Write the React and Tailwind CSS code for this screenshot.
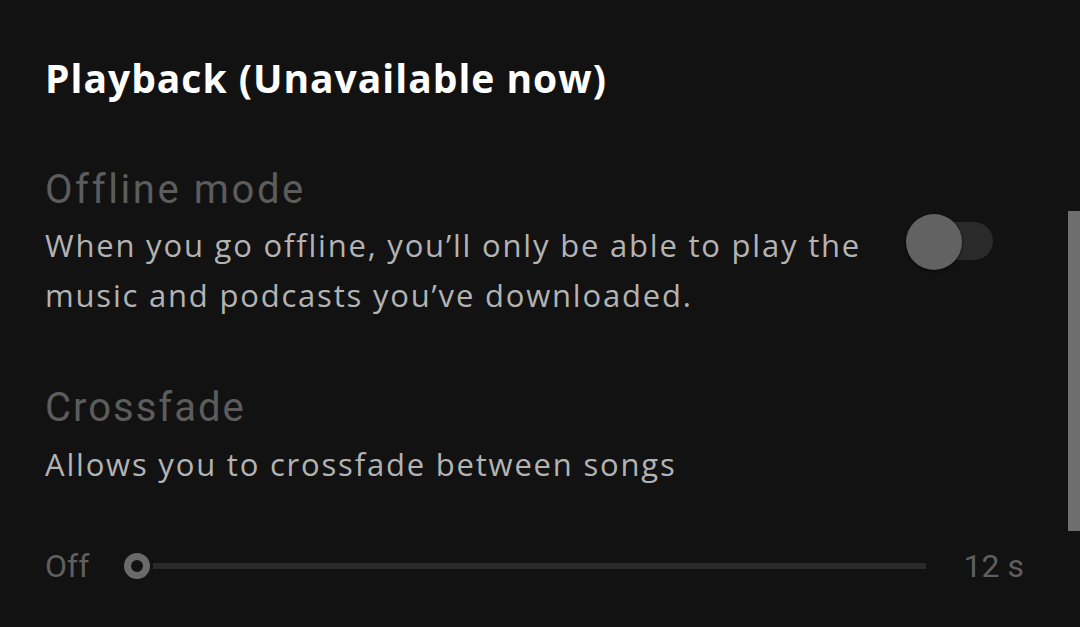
export default function App() {
  return (
    <div className="relative w-[1080px] h-[627px] overflow-hidden bg-[#121212]">
      <div className="pl-[45px] pr-[56px] pt-[52px] font-['Open_Sans','Liberation_Sans',sans-serif]">
        <h1 className="text-[39px] leading-[52px] font-bold text-white tracking-[1px]">Playback (Unavailable now)</h1>
        <div className="mt-[64px] flex items-start justify-between">
          <div>
            <div className="font-['Roboto',sans-serif] text-[40px] leading-[44px] tracking-[2.6px] text-[#5c5c5c]">Offline mode</div>
            <p className="mt-[8px] text-[31px] leading-[50px] tracking-[1.8px] text-[#b3b3b3]">
              When you go offline, you’ll only be able to play the<br />music and podcasts you’ve downloaded.
            </p>
          </div>
          <div className="relative mt-[54px] mr-[31px] w-[88px] h-[38px]">
            <div className="absolute right-0 top-0 w-[80px] h-[38px] rounded-full bg-[#2a2a2a]" />
            <div className="absolute left-[1px] top-[-8px] w-[56px] h-[56px] rounded-full bg-[#626262] shadow-[0_1px_3px_rgba(0,0,0,0.6)]" />
          </div>
        </div>
        <div className="mt-[66px] font-['Roboto',sans-serif] text-[40px] leading-[44px] tracking-[2px] text-[#5c5c5c]">Crossfade</div>
        <p className="mt-[14px] text-[31px] leading-[40px] tracking-[1.8px] text-[#b3b3b3]">Allows you to crossfade between songs</p>
        <div className="mt-[62px] flex items-center font-['Roboto',sans-serif] text-[32px] text-[#5f5f5f]">
          <span className="w-[80px] leading-[40px]">Off</span>
          <div className="relative flex-1 h-[26px] flex items-center">
            <div className="ml-[28px] flex-1 h-[6px] bg-[#2a2a2a]" />
            <div className="absolute left-[-1px] top-0 w-[26px] h-[26px] rounded-full border-[7px] border-[#6a6a6a] bg-[#121212]" />
          </div>
          <span className="ml-[38px] leading-[40px]">12 s</span>
        </div>
      </div>
      <div className="absolute right-0 top-[211px] w-[12px] h-[320px] bg-[#6e6e6e]" />
    </div>
  );
}
